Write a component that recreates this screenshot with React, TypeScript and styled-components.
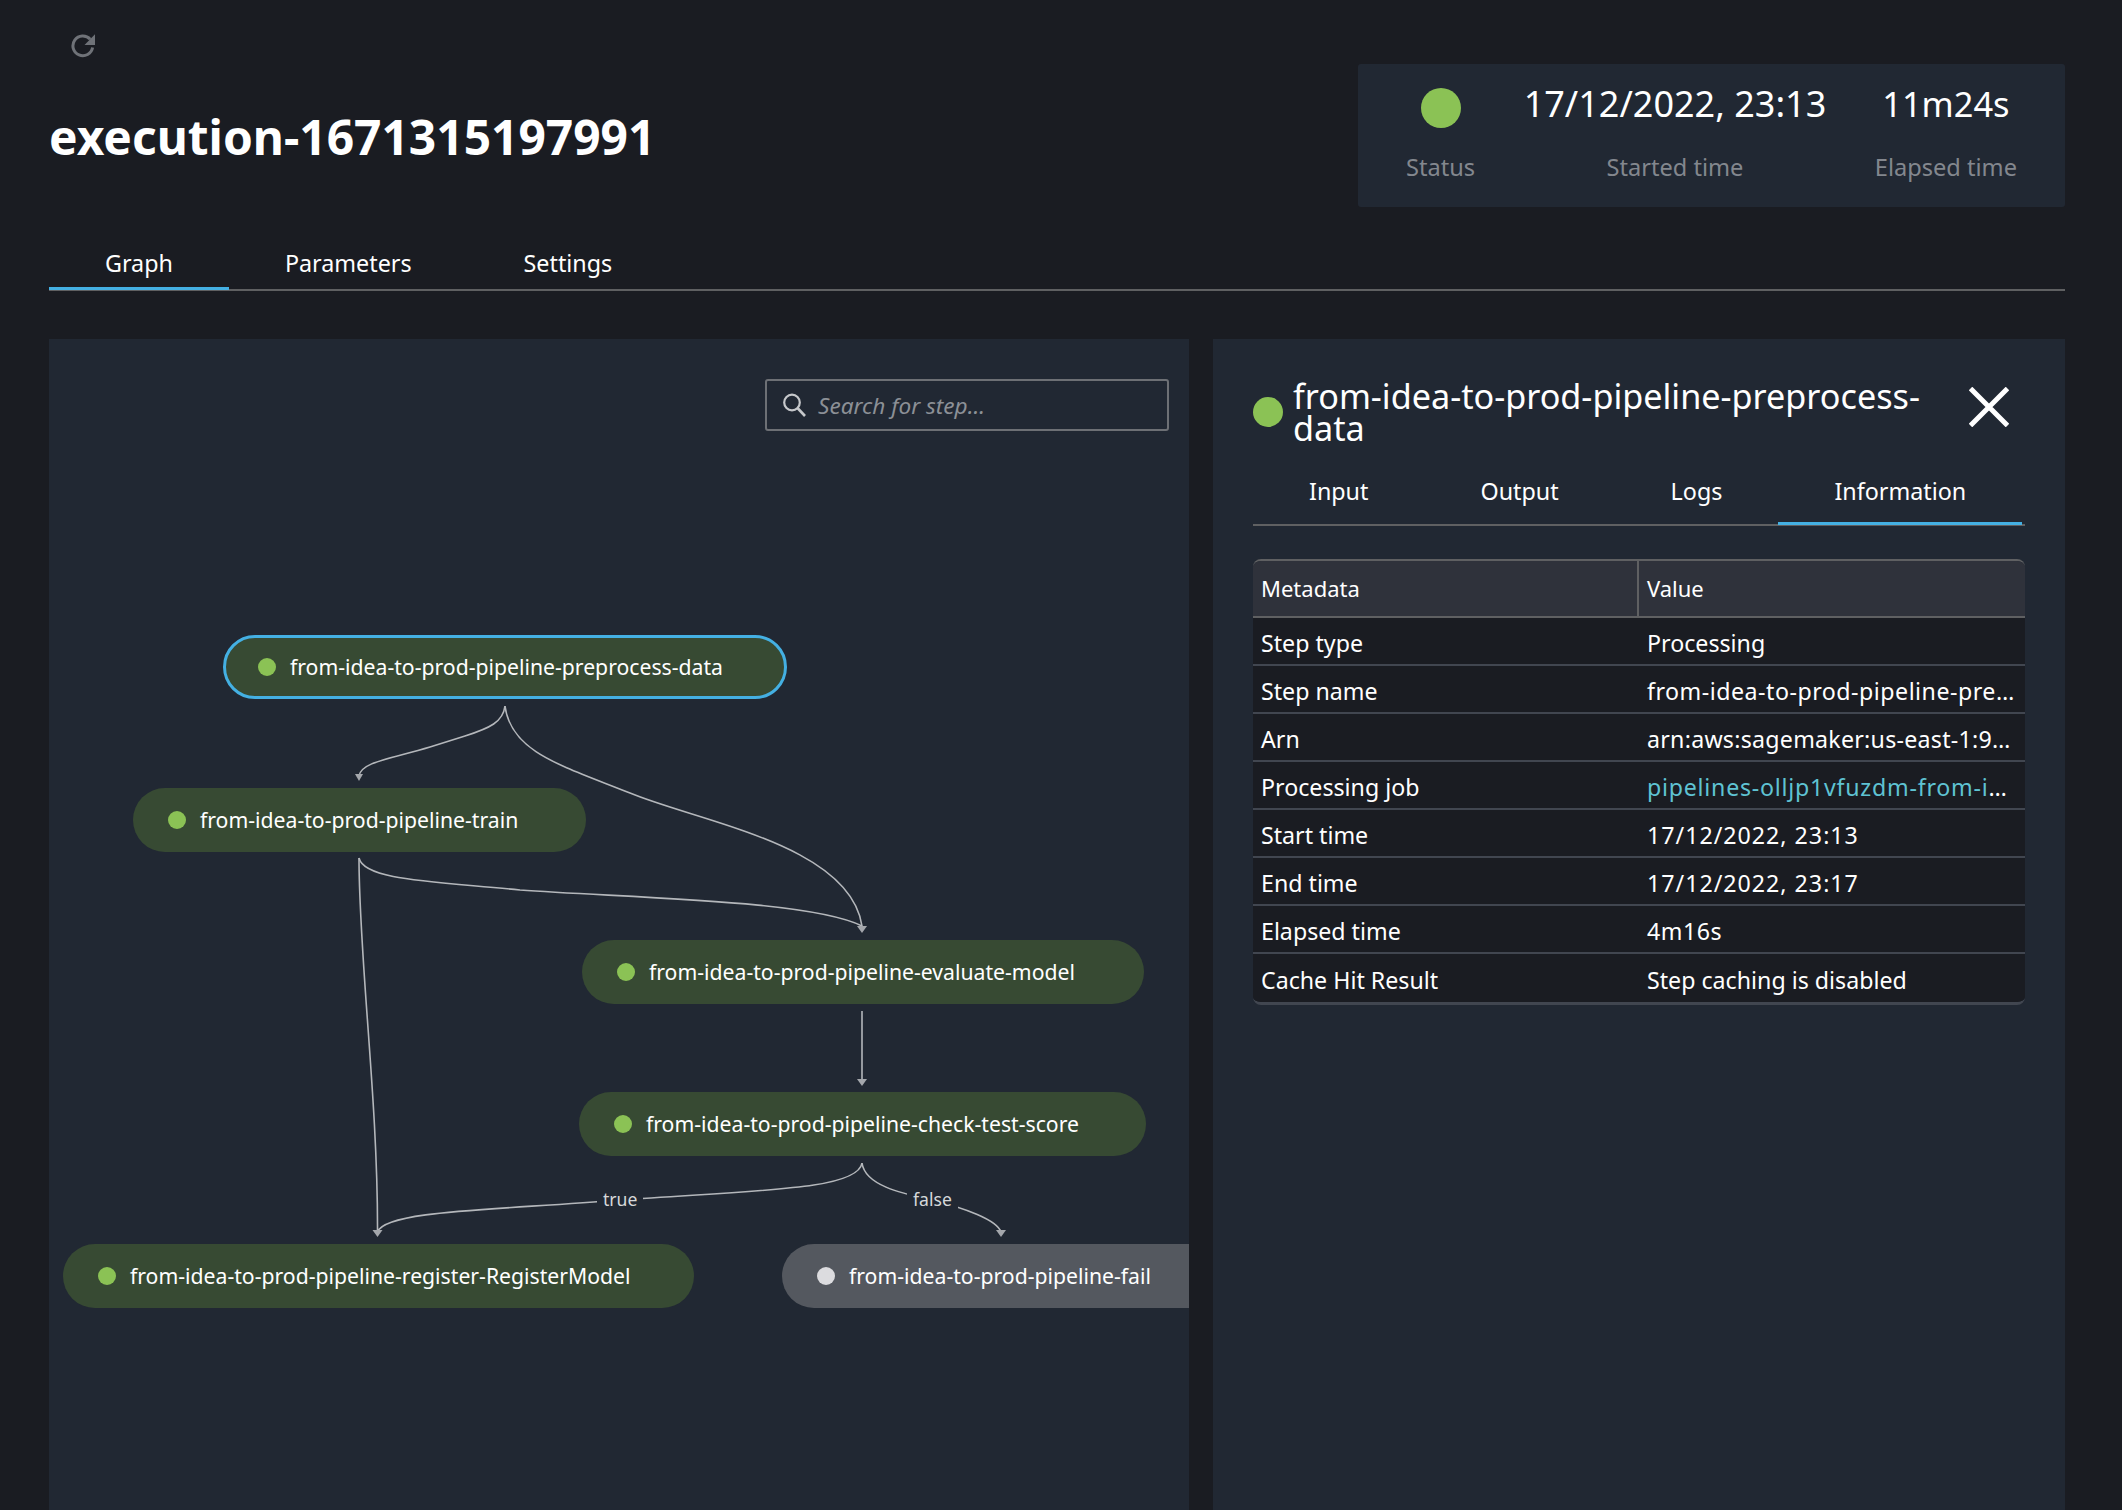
import React from "react";
import styled, { createGlobalStyle } from "styled-components";

const GlobalStyle = createGlobalStyle`
  html, body {
    margin: 0;
    padding: 0;
    background: #1a1c22;
  }
  * {
    box-sizing: border-box;
  }
`;

type StepStatus = "done" | "idle";

const steps: { name: string; left: number; top: number; width: number; status: StepStatus; selected?: boolean }[] = [
  { name: "from-idea-to-prod-pipeline-preprocess-data", left: 174, top: 296, width: 564, status: "done", selected: true },
  { name: "from-idea-to-prod-pipeline-train", left: 84, top: 449, width: 453, status: "done" },
  { name: "from-idea-to-prod-pipeline-evaluate-model", left: 533, top: 601, width: 562, status: "done" },
  { name: "from-idea-to-prod-pipeline-check-test-score", left: 530, top: 753, width: 567, status: "done" },
  { name: "from-idea-to-prod-pipeline-register-RegisterModel", left: 14, top: 905, width: 631, status: "done" },
  { name: "from-idea-to-prod-pipeline-fail", left: 733, top: 905, width: 440, status: "idle" },
];

const metadata: { label: string; value: string; link?: boolean; tracking?: number }[] = [
  { label: "Step type", value: "Processing" },
  { label: "Step name", value: "from-idea-to-prod-pipeline-preprocess-data", tracking: 0.5 },
  { label: "Arn", value: "arn:aws:sagemaker:us-east-1:949335012047:pipeline/from-idea-to-prod-pipeline", tracking: 0.25 },
  { label: "Processing job", value: "pipelines-olljp1vfuzdm-from-idea-to-prod-pipeline-preprocess", link: true, tracking: 0.75 },
  { label: "Start time", value: "17/12/2022, 23:13", tracking: 1 },
  { label: "End time", value: "17/12/2022, 23:17", tracking: 1 },
  { label: "Elapsed time", value: "4m16s", tracking: 0.5 },
  { label: "Cache Hit Result", value: "Step caching is disabled" },
];

const RefreshIcon = () => (
  <RefreshSvg viewBox="0 0 24 24" width="24" height="24">
    <path d="M19.2 5.2A9.9 9.9 0 1 0 21.6 13.5" fill="none" stroke="#6f7278" strokeWidth="3" />
    <polygon points="24,0.3 24,11 13.5,11" fill="#6f7278" />
  </RefreshSvg>
);

const SearchIcon = () => (
  <svg viewBox="0 0 24 24" width="24" height="24">
    <circle cx="10" cy="9.5" r="7.8" fill="none" stroke="#c6c8cb" strokeWidth="2.2" />
    <line x1="15.5" y1="15" x2="23" y2="23" stroke="#c6c8cb" strokeWidth="2.6" />
  </svg>
);

const CloseIcon = () => (
  <svg viewBox="0 0 40 40" width="40" height="40">
    <path d="M1.5 1.5L38.5 38.5M38.5 1.5L1.5 38.5" fill="none" stroke="#ffffff" strokeWidth="5" />
  </svg>
);

const Arrow = ({ x, y, size = 5 }: { x: number; y: number; size?: number }) => (
  <polygon points={`${x - size},${y - 7} ${x + size},${y - 7} ${x},${y}`} fill="#a4a7ac" />
);

const GraphEdges = () => (
  <EdgeSvg viewBox="49 339 1140 1171" width="1140" height="1171">
    <g fill="none" stroke="#b4b7bb" strokeWidth="1.6">
      <path d="M505 706C503 722 490 728 465 736L430 747C390 759 361 762 359 776" />
      <path d="M505 706C511 752 560 765 630 793C700 822 850 845 862 926" />
      <path d="M359 858C364 880 430 881 520 890C630 898 810 900 862 926" />
      <path d="M359 858C359 960 378 1100 377.5 1232" />
      <path d="M862 1011L862 1081" />
      <path d="M862 1163C858 1190 760 1190 620 1200C500 1210 385 1210 377.5 1232" />
      <path d="M862 1163C865 1185 900 1193 931 1200C965 1208 997 1220 1001 1232" />
    </g>
    <Arrow x={359} y={781} size={4} />
    <Arrow x={862} y={933} />
    <Arrow x={862} y={1086} />
    <Arrow x={377.5} y={1237} />
    <Arrow x={1001} y={1237} />
  </EdgeSvg>
);

export default function App() {
  return (
    <Page>
      <GlobalStyle />
      <Header>
        <TitleColumn>
          <RefreshIcon />
          <Title>execution-1671315197991</Title>
        </TitleColumn>
        <StatBox>
          <Stat>
            <StatValue>
              <HeaderDot $size={40} />
            </StatValue>
            <StatLabel>Status</StatLabel>
          </Stat>
          <Stat>
            <StatValue $size={36}>17/12/2022, 23:13</StatValue>
            <StatLabel>Started time</StatLabel>
          </Stat>
          <Stat>
            <StatValue $size={34.4}>11m24s</StatValue>
            <StatLabel>Elapsed time</StatLabel>
          </Stat>
        </StatBox>
      </Header>

      <TabBar>
        <Tab $active>Graph</Tab>
        <Tab>Parameters</Tab>
        <Tab>Settings</Tab>
      </TabBar>

      <Main>
        <GraphPanel>
          <SearchBox>
            <SearchIcon />
            <SearchText>Search for step...</SearchText>
          </SearchBox>
          <GraphEdges />
          {steps.map((step) => (
            <StepNode
              key={step.name}
              $left={step.left}
              $top={step.top}
              $width={step.width}
              $status={step.status}
              $selected={step.selected}
            >
              <StatusDot $size={18} $idle={step.status === "idle"} />
              <StepName>{step.name}</StepName>
            </StepNode>
          ))}
          <EdgeLabel $left={548} $top={847}>true</EdgeLabel>
          <EdgeLabel $left={858} $top={847}>false</EdgeLabel>
        </GraphPanel>

        <DetailPanel>
          <DetailHeader>
            <StatusDot $size={30} />
            <DetailTitle>from-idea-to-prod-pipeline-preprocess-data</DetailTitle>
            <CloseButton>
              <CloseIcon />
            </CloseButton>
          </DetailHeader>
          <DetailTabBar>
            <Tab>Input</Tab>
            <Tab>Output</Tab>
            <Tab>Logs</Tab>
            <Tab $active>Information</Tab>
          </DetailTabBar>
          <TableFrame>
            <MetaTable>
              <thead>
                <tr>
                  <HeadCell>Metadata</HeadCell>
                  <HeadCell>Value</HeadCell>
                </tr>
              </thead>
              <tbody>
                {metadata.map((row) => (
                  <tr key={row.label}>
                    <BodyCell>{row.label}</BodyCell>
                    <BodyCell $tracking={row.tracking}>
                      {row.link ? <JobLink>{row.value}</JobLink> : row.value}
                    </BodyCell>
                  </tr>
                ))}
              </tbody>
            </MetaTable>
          </TableFrame>
        </DetailPanel>
      </Main>
    </Page>
  );
}

const Page = styled.div`
  width: 2122px;
  height: 1510px;
  padding: 0 57px 0 49px;
  overflow: hidden;
  background: #1a1c22;
  color: #ffffff;
  font-family: "Noto Sans", "Open Sans", sans-serif;
  font-size: 24px;
`;

const Header = styled.div`
  display: flex;
  justify-content: space-between;
  align-items: flex-start;
  height: 233px;
`;

const TitleColumn = styled.div`
  padding-top: 34px;
  display: flex;
  flex-direction: column;
  align-items: flex-start;
`;

const RefreshSvg = styled.svg`
  margin-left: 22px;
`;

const Title = styled.h1`
  margin: 46px 0 0;
  font-size: 47.9px;
  line-height: 66px;
  font-weight: 700;
  color: #ffffff;
`;

const StatBox = styled.div`
  display: flex;
  justify-content: space-between;
  width: 707px;
  height: 143px;
  margin-top: 64px;
  padding: 10px 48px 0;
  background: #212833;
  border-radius: 3px;
`;

const Stat = styled.div`
  display: flex;
  flex-direction: column;
  align-items: center;
`;

const StatValue = styled.div<{ $size?: number }>`
  display: flex;
  align-items: center;
  height: 60px;
  font-size: ${(p) => p.$size ?? 34}px;
  line-height: 60px;
  white-space: nowrap;
`;

const StatLabel = styled.div`
  margin-top: 14px;
  height: 40px;
  font-size: 23.6px;
  line-height: 38px;
  color: #83878e;
  white-space: nowrap;
`;

const StatusDot = styled.span<{ $size: number; $idle?: boolean }>`
  display: block;
  flex: none;
  width: ${(p) => p.$size}px;
  height: ${(p) => p.$size}px;
  border-radius: 50%;
  background: ${(p) => (p.$idle ? "#dcdcdf" : "#8bc255")};
`;

const HeaderDot = styled(StatusDot)`
  margin-top: 8px;
`;

const TabBar = styled.div`
  display: flex;
  height: 58px;
  padding-top: 4px;
  border-bottom: 2px solid #5f6062;
`;

const Tab = styled.div<{ $active?: boolean }>`
  position: relative;
  height: 100%;
  padding: 0 56px;
  display: flex;
  align-items: center;
  font-size: 23.3px;
  line-height: 32px;
  color: #ffffff;
  white-space: nowrap;
  ${(p) =>
    p.$active &&
    `
    &::after {
      content: "";
      position: absolute;
      left: 0;
      right: 0;
      bottom: -1px;
      height: 3px;
      background: #44b0e3;
    }
  `}
`;

const Main = styled.div`
  display: grid;
  grid-template-columns: 1140px 852px;
  column-gap: 24px;
  margin-top: 48px;
  height: 1171px;
`;

const GraphPanel = styled.div`
  position: relative;
  overflow: hidden;
  background: #212833;
`;

const SearchBox = styled.div`
  position: absolute;
  top: 40px;
  left: 716px;
  width: 404px;
  height: 52px;
  display: flex;
  align-items: center;
  gap: 12px;
  padding-left: 15px;
  border: 2px solid #6d7075;
  border-radius: 3px;
`;

const SearchText = styled.span`
  font-size: 22.6px;
  font-style: italic;
  color: #8c9096;
`;

const EdgeSvg = styled.svg`
  position: absolute;
  top: 0;
  left: 0;
`;

const StepNode = styled.div<{ $left: number; $top: number; $width: number; $status: StepStatus; $selected?: boolean }>`
  position: absolute;
  left: ${(p) => p.$left}px;
  top: ${(p) => p.$top}px;
  width: ${(p) => p.$width}px;
  height: 64px;
  display: flex;
  align-items: center;
  gap: 14px;
  padding-left: ${(p) => (p.$selected ? 32 : 35)}px;
  border-radius: 32px;
  background: ${(p) => (p.$status === "idle" ? "#54585f" : "#374a33")};
  border: ${(p) => (p.$selected ? "3px solid #44b0e3" : "none")};
`;

const StepName = styled.span`
  font-size: 21.2px;
  line-height: 28px;
  white-space: nowrap;
  color: #ffffff;
`;

const EdgeLabel = styled.span<{ $left: number; $top: number }>`
  position: absolute;
  left: ${(p) => p.$left}px;
  top: ${(p) => p.$top}px;
  padding: 0 6px;
  font-size: 17.6px;
  line-height: 26px;
  color: #d6d8da;
  background: #212833;
`;

const DetailPanel = styled.div`
  padding: 41px 40px 0;
  background: #212833;
`;

const DetailHeader = styled.div`
  display: flex;
  align-items: center;
  height: 64px;
  gap: 10px;
`;

const DetailTitle = styled.h2`
  margin: 0;
  width: 666px;
  font-size: 34.2px;
  line-height: 32px;
  font-weight: 400;
  color: #ffffff;
`;

const CloseButton = styled.div`
  display: flex;
  margin-top: -10px;
`;

const DetailTabBar = styled(TabBar)`
  height: 82px;
  padding-top: 14px;
`;

const TableFrame = styled.div`
  margin-top: 33px;
  border-top: 2px solid #5f6062;
  border-bottom: 3px solid #414650;
  border-radius: 8px;
  overflow: hidden;
`;

const MetaTable = styled.table`
  width: 772px;
  table-layout: fixed;
  border-collapse: separate;
  border-spacing: 0;
`;

const HeadCell = styled.th`
  height: 57px;
  padding: 0 8px 1px;
  background: #2f323b;
  border-bottom: 2px solid #5f6062;
  font-size: 22px;
  font-weight: 400;
  text-align: left;
  color: #ffffff;
  &:first-child {
    width: 386px;
    border-right: 2px solid #5f6062;
  }
`;

const BodyCell = styled.td<{ $tracking?: number }>`
  height: 48px;
  padding: 3px 8px 0;
  background: #1a1c22;
  border-bottom: 2px solid #414650;
  font-size: 23.2px;
  letter-spacing: ${(p) => p.$tracking ?? 0}px;
  white-space: nowrap;
  overflow: hidden;
  text-overflow: ellipsis;
  color: #ffffff;
  tr:last-child & {
    border-bottom: none;
  }
`;

const JobLink = styled.a`
  color: #5fc3d3;
`;
